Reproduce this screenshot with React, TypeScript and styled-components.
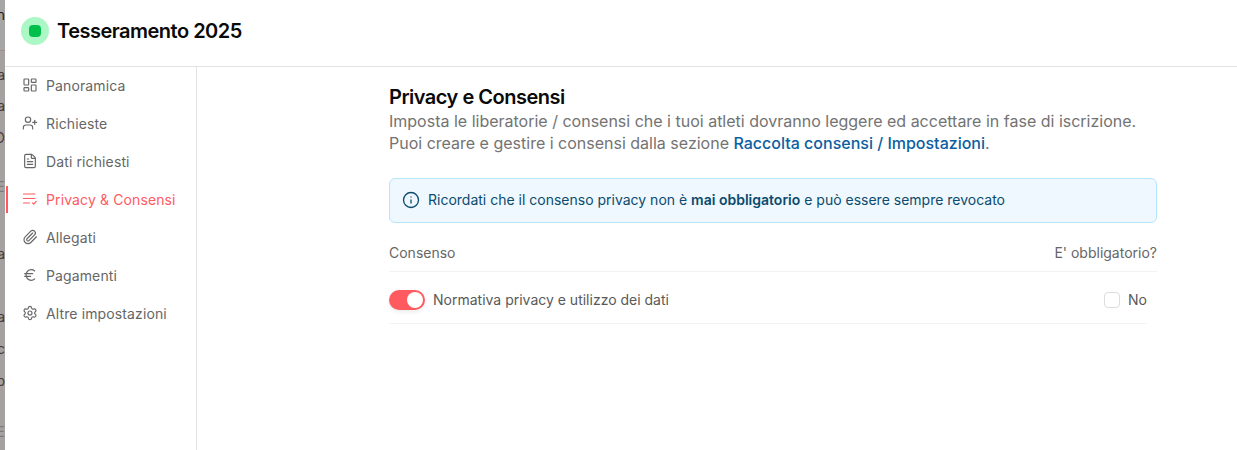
import React from "react";
import styled, { createGlobalStyle } from "styled-components";
import { LayoutDashboard, UserPlus, FileText, Paperclip, Euro, Settings, Info } from "lucide-react";

const GlobalStyle = createGlobalStyle`
  html, body {
    margin: 0;
    height: 100%;
    overflow: hidden;
    background: #fff;
    font-family: Inter, "Liberation Sans", sans-serif;
  }
  * { box-sizing: border-box; }
`;

const Page = styled.div`
  display: flex;
  width: 1237px;
  height: 450px;
  overflow: hidden;
`;
const Backdrop = styled.div`
  width: 5px;
  flex: none;
  background: #a5a1a0;
  overflow: hidden;
  display: flex;
  flex-direction: column;
`;
const BackdropTop = styled.div`
  height: 51px;
  flex: none;
  background: #a6a6a6;
  border-bottom: 1px solid #a58a88;
  padding-top: 6px;
  color: #222;
  font-size: 14px;
  line-height: 18px;
  display: flex;
  justify-content: flex-end;
`;
const Fragment = styled.div<{ $gap: number; $soft?: boolean }>`
  width: 5px;
  height: 18px;
  flex: none;
  margin-top: ${(p) => p.$gap}px;
  display: flex;
  justify-content: flex-end;
  color: ${(p) => (p.$soft ? "#7f7b7a" : "#4a3a3a")};
  font-size: 14px;
  line-height: 18px;
  white-space: nowrap;
`;
const Panel = styled.div`
  flex: 1;
  display: flex;
  flex-direction: column;
  min-width: 0;
`;
const Header = styled.header`
  height: 67px;
  flex: none;
  display: flex;
  align-items: center;
  gap: 8px;
  padding-left: 16px;
  border-bottom: 1px solid #e2e2e2;
`;
const Dot = styled.div`
  width: 28px;
  height: 28px;
  border-radius: 50%;
  background: #abf7c6;
  display: flex;
  align-items: center;
  justify-content: center;
  margin-top: -4px;
`;
const DotCore = styled.div`
  width: 12px;
  height: 12px;
  border-radius: 4px;
  background: #00c04b;
`;
const Title = styled.h1`
  margin: -4px 0 0;
  font-size: 20px;
  line-height: 28px;
  font-weight: 600;
  letter-spacing: -0.5px;
  color: #0a0a0a;
`;
const Body = styled.div`
  flex: 1;
  display: flex;
  min-height: 0;
`;
const Sidebar = styled.nav`
  width: 192px;
  flex: none;
  border-right: 1px solid #e2e2e2;
  display: flex;
  flex-direction: column;
`;
const NavItem = styled.div<{ $active?: boolean }>`
  height: 38px;
  display: flex;
  align-items: center;
  gap: 8px;
  padding: 0 0 2px 17px;
  font-size: 14px;
  font-weight: 400;
  letter-spacing: 0.12px;
  color: ${(p) => (p.$active ? "#ff5a5f" : "#666666")};
  position: relative;
  &::before {
    content: "";
    display: ${(p) => (p.$active ? "block" : "none")};
    position: absolute;
    left: 1px;
    top: 5px;
    bottom: 6px;
    width: 2px;
    background: #ff5a5f;
  }
`;
const Content = styled.main`
  flex: 1;
  padding: 19px 80px 0 192px;
`;
const Heading = styled.h2`
  margin: 0;
  font-size: 20px;
  line-height: 22px;
  font-weight: 600;
  letter-spacing: -0.5px;
  color: #0a0a0a;
`;
const Description = styled.p`
  margin: 2px 0 0;
  font-size: 16px;
  line-height: 22px;
  color: #737373;
`;
const DescLink = styled.span`
  color: #0b609f;
  font-weight: 500;
`;
const Alert = styled.div`
  margin-top: 24px;
  height: 45px;
  display: flex;
  align-items: center;
  gap: 8px;
  padding: 0 0 2px 12px;
  background: #eef8fe;
  border: 1px solid #b5e5fc;
  border-radius: 6px;
  font-size: 14px;
  color: #0c4a6e;
  svg { flex: none; }
  b { font-weight: 600; }
`;
const TableHead = styled.div`
  height: 49px;
  padding-top: 10px;
  display: flex;
  align-items: center;
  justify-content: space-between;
  border-bottom: 1px solid #f2f2f2;
  font-size: 14px;
  color: #666666;
`;
const Row = styled.div`
  height: 52px;
  margin-right: 10px;
  padding-top: 4px;
  display: flex;
  align-items: center;
  gap: 8px;
  border-bottom: 1px solid #f2f2f2;
  font-size: 14px;
  color: #595959;
`;
const Toggle = styled.div`
  width: 36px;
  height: 20px;
  border-radius: 10px;
  background: #ff5a5f;
  display: flex;
  align-items: center;
  justify-content: flex-end;
  padding-right: 2px;
  box-shadow: 0 2px 4px rgba(0, 0, 0, 0.08);
`;
const Knob = styled.div`
  width: 16px;
  height: 16px;
  border-radius: 50%;
  background: #fff;
`;
const Spacer = styled.div`
  flex: 1;
`;
const Check = styled.div`
  width: 16px;
  height: 16px;
  border-radius: 4px;
  border: 1px solid #dcdcdc;
  background: #fff;
`;

const ListCheck = () => (
  <svg width="16" height="16" viewBox="0 0 16 16" fill="none" stroke="#ff5a5f" strokeWidth="1.2" strokeLinecap="round" strokeLinejoin="round">
    <path d="M1.5 3h11.5M1.5 7.5h11.5M1.5 12h6" />
    <path d="M10.5 11.8l1.3 1.3 2.4-2.7" />
  </svg>
);

const fragments: { text: string; gap: number; soft?: boolean }[] = [
  { text: "a", gap: 15 },
  { text: "a", gap: 13 },
  { text: "O", gap: 14 },
  { text: "E", gap: 31, soft: true },
  { text: "a", gap: 49 },
  { text: "a", gap: 45 },
  { text: "rc", gap: 14 },
  { text: "b", gap: 14 },
  { text: "E", gap: 33, soft: true },
];

const items = [
  { label: "Panoramica", icon: <LayoutDashboard size={16} strokeWidth={1.75} /> },
  { label: "Richieste", icon: <UserPlus size={16} strokeWidth={1.75} /> },
  { label: "Dati richiesti", icon: <FileText size={16} strokeWidth={1.75} /> },
  { label: "Privacy & Consensi", icon: <ListCheck />, active: true },
  { label: "Allegati", icon: <Paperclip size={16} strokeWidth={1.75} /> },
  { label: "Pagamenti", icon: <Euro size={16} strokeWidth={1.75} /> },
  { label: "Altre impostazioni", icon: <Settings size={16} strokeWidth={1.75} /> },
];

const App = () => {
  return (
    <Page>
      <GlobalStyle />
      <Backdrop>
        <BackdropTop>n</BackdropTop>
        {fragments.map((f, i) => (
          <Fragment key={i} $gap={f.gap} $soft={f.soft}>
            {f.text}
          </Fragment>
        ))}
      </Backdrop>
      <Panel>
        <Header>
          <Dot>
            <DotCore />
          </Dot>
          <Title>Tesseramento 2025</Title>
        </Header>
        <Body>
          <Sidebar>
            {items.map((item) => (
              <NavItem key={item.label} $active={item.active}>
                {item.icon}
                {item.label}
              </NavItem>
            ))}
          </Sidebar>
          <Content>
            <Heading>Privacy e Consensi</Heading>
            <Description>
              Imposta le liberatorie / consensi che i tuoi atleti dovranno leggere ed accettare in fase di iscrizione.
              <br />
              Puoi creare e gestire i consensi dalla sezione <DescLink>Raccolta consensi / Impostazioni</DescLink>.
            </Description>
            <Alert>
              <Info size={18} strokeWidth={1.75} />
              <span>
                Ricordati che il consenso privacy non è <b>mai obbligatorio</b> e può essere sempre revocato
              </span>
            </Alert>
            <TableHead>
              <span>Consenso</span>
              <span>E' obbligatorio?</span>
            </TableHead>
            <Row>
              <Toggle>
                <Knob />
              </Toggle>
              <span>Normativa privacy e utilizzo dei dati</span>
              <Spacer />
              <Check />
              <span>No</span>
            </Row>
          </Content>
        </Body>
      </Panel>
    </Page>
  );
};

export default App;
